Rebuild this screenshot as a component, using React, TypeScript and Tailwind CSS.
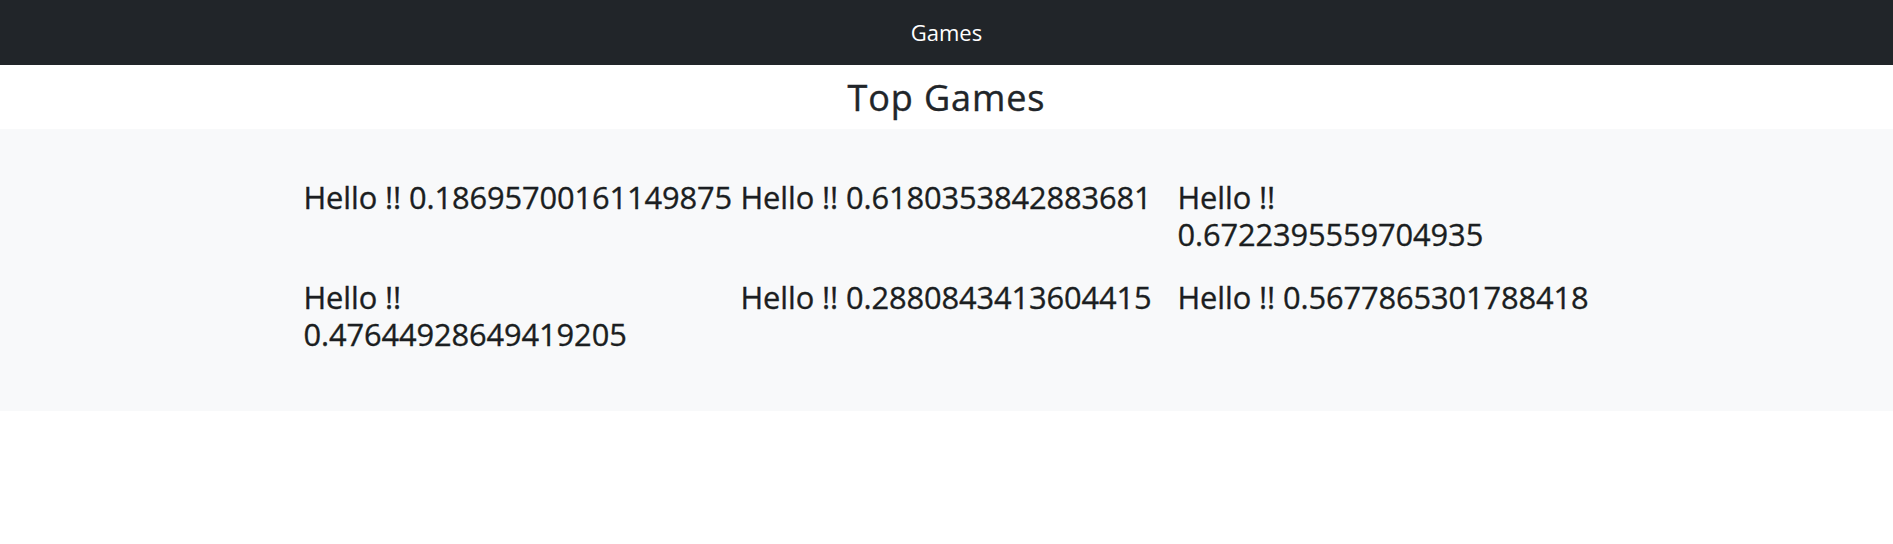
import React from "react";

const rows: string[][][] = [
  [["Hello !! 0.18695700161149875"], ["Hello !! 0.6180353842883681"], ["Hello !!", "0.6722395559704935"]],
  [["Hello !!", "0.47644928649419205"], ["Hello !! 0.2880843413604415"], ["Hello !! 0.5677865301788418"]],
];

export default function App() {
  return (
    <div className="min-h-[544px] bg-white text-[#212529] font-['Open_Sans',sans-serif]">
      <nav className="h-[65px] bg-[#212529] flex items-start justify-center pt-[16px]">
        <span className="text-white text-[22px] leading-[33px]">Games</span>
      </nav>
      <div className="h-[64px] pt-[11px] flex justify-center">
        <h2 className="text-[36px] leading-[43px] font-medium tracking-[0.9px] [-webkit-text-stroke:0.4px_#212529]">
          Top Games
        </h2>
      </div>
      <section className="bg-[#f8f9fa] h-[282px] pt-[50px]">
        <div className="w-[1320px] mx-auto pl-[17px] flex flex-col gap-[26px]">
          {rows.map((row, ri) => (
            <div key={ri} className="grid grid-cols-[437px_437px_437px]">
              {row.map((lines, ci) => (
                <h3
                  key={ci}
                  className="text-[30.8px] leading-[37px] font-medium tracking-[-0.1px] h-[74px] text-[#1b1e21] [-webkit-text-stroke:0.35px_#1b1e21]"
                >
                  {lines.map((l, li) => (
                    <span key={li} className="block">
                      {l}
                    </span>
                  ))}
                </h3>
              ))}
            </div>
          ))}
        </div>
      </section>
    </div>
  );
}
